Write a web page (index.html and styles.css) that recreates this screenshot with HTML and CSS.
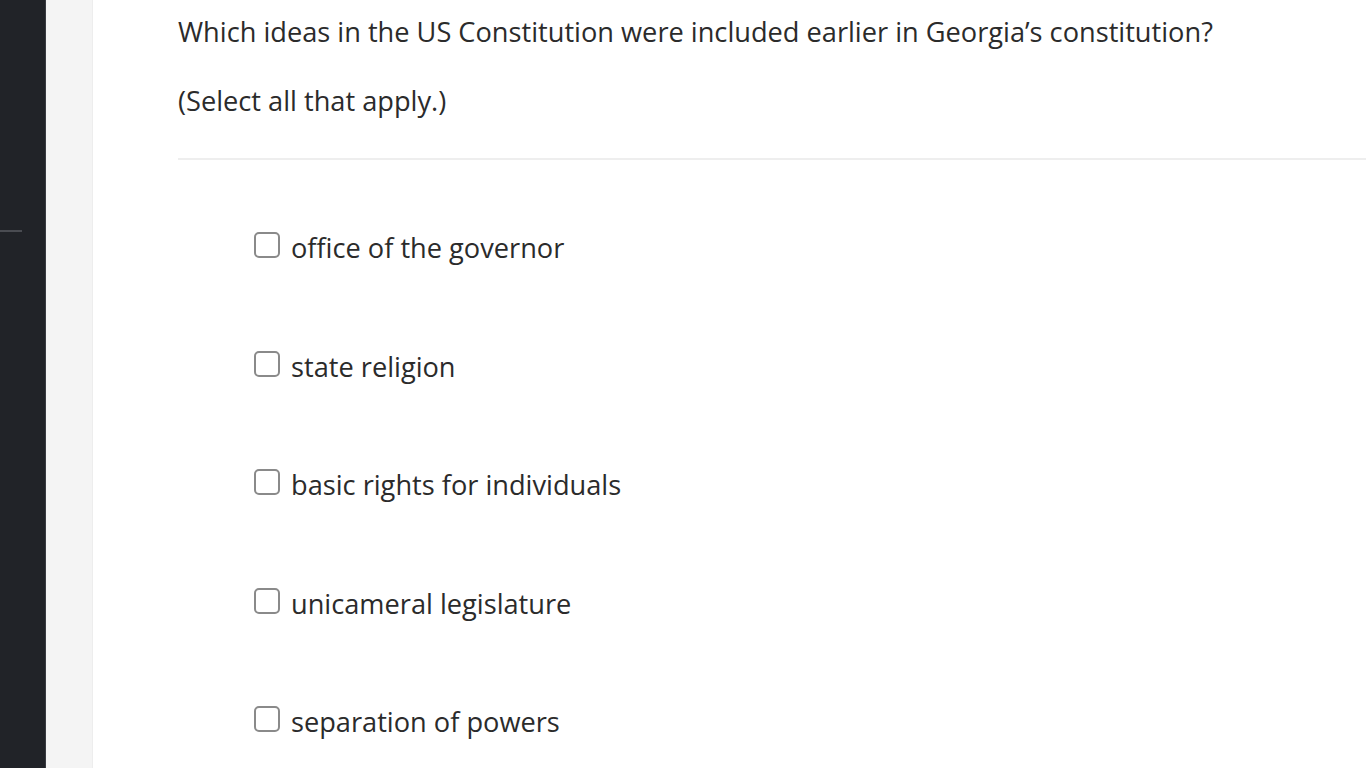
FILE: index.html
```html
<!DOCTYPE html>
<html>
<head>
<meta charset="utf-8">
<link rel="stylesheet" href="styles.css">
</head>
<body>
<div class="app">
  <aside class="sidebar"><div class="sidebar-mark"></div></aside>
  <div class="gutter"></div>
  <main class="content">
    <p class="question">Which ideas in the US Constitution were included earlier in Georgia’s constitution?</p>
    <p class="hint">(Select all that apply.)</p>
    <hr class="divider">
    <ul class="options">
      <li class="option"><span class="box"></span><span class="label">office of the governor</span></li>
      <li class="option"><span class="box"></span><span class="label">state religion</span></li>
      <li class="option"><span class="box"></span><span class="label">basic rights for individuals</span></li>
      <li class="option"><span class="box"></span><span class="label">unicameral legislature</span></li>
      <li class="option"><span class="box"></span><span class="label">separation of powers</span></li>
    </ul>
  </main>
</div>
</body>
</html>
```

FILE: styles.css
```css
html, body {
  margin: 0;
  padding: 0;
  height: 100%;
  overflow: hidden;
  background: #fff;
}
.app {
  display: flex;
  height: 768px;
  font-family: "Open Sans", "Noto Sans", sans-serif;
  color: #2b2b2b;
}
.sidebar {
  width: 45px;
  flex: none;
  background: #212328;
  border-right: 1px solid #3a3c42;
  padding-top: 230px;
  box-sizing: content-box;
}
.sidebar-mark {
  width: 22px;
  height: 2px;
  background: #4a4c52;
}
.gutter {
  width: 46px;
  flex: none;
  background: #f4f4f4;
  border-right: 1px solid #ededed;
}
.content {
  flex: 1;
  padding: 14px 0 0 85px;
  min-width: 0;
}
.question {
  margin: 0;
  font-size: 27.2px;
  line-height: 36px;
}
.hint {
  margin: 33px 0 0;
  font-size: 27.2px;
  line-height: 36px;
}
.divider {
  margin: 39px 0 0;
  border: none;
  height: 2px;
  background: #eeeeee;
}
.options {
  list-style: none;
  margin: 0;
  padding: 70px 0 0 76px;
  display: flex;
  flex-direction: column;
  gap: 82.5px;
}
.option {
  display: flex;
  align-items: center;
  gap: 11px;
  height: 36px;
  font-size: 27.2px;
}
.box {
  width: 22px;
  height: 22px;
  border: 2px solid #8a8a8a;
  border-radius: 5px;
  flex: none;
  margin-top: -6px;
}
.label {
  line-height: 36px;
}
```
